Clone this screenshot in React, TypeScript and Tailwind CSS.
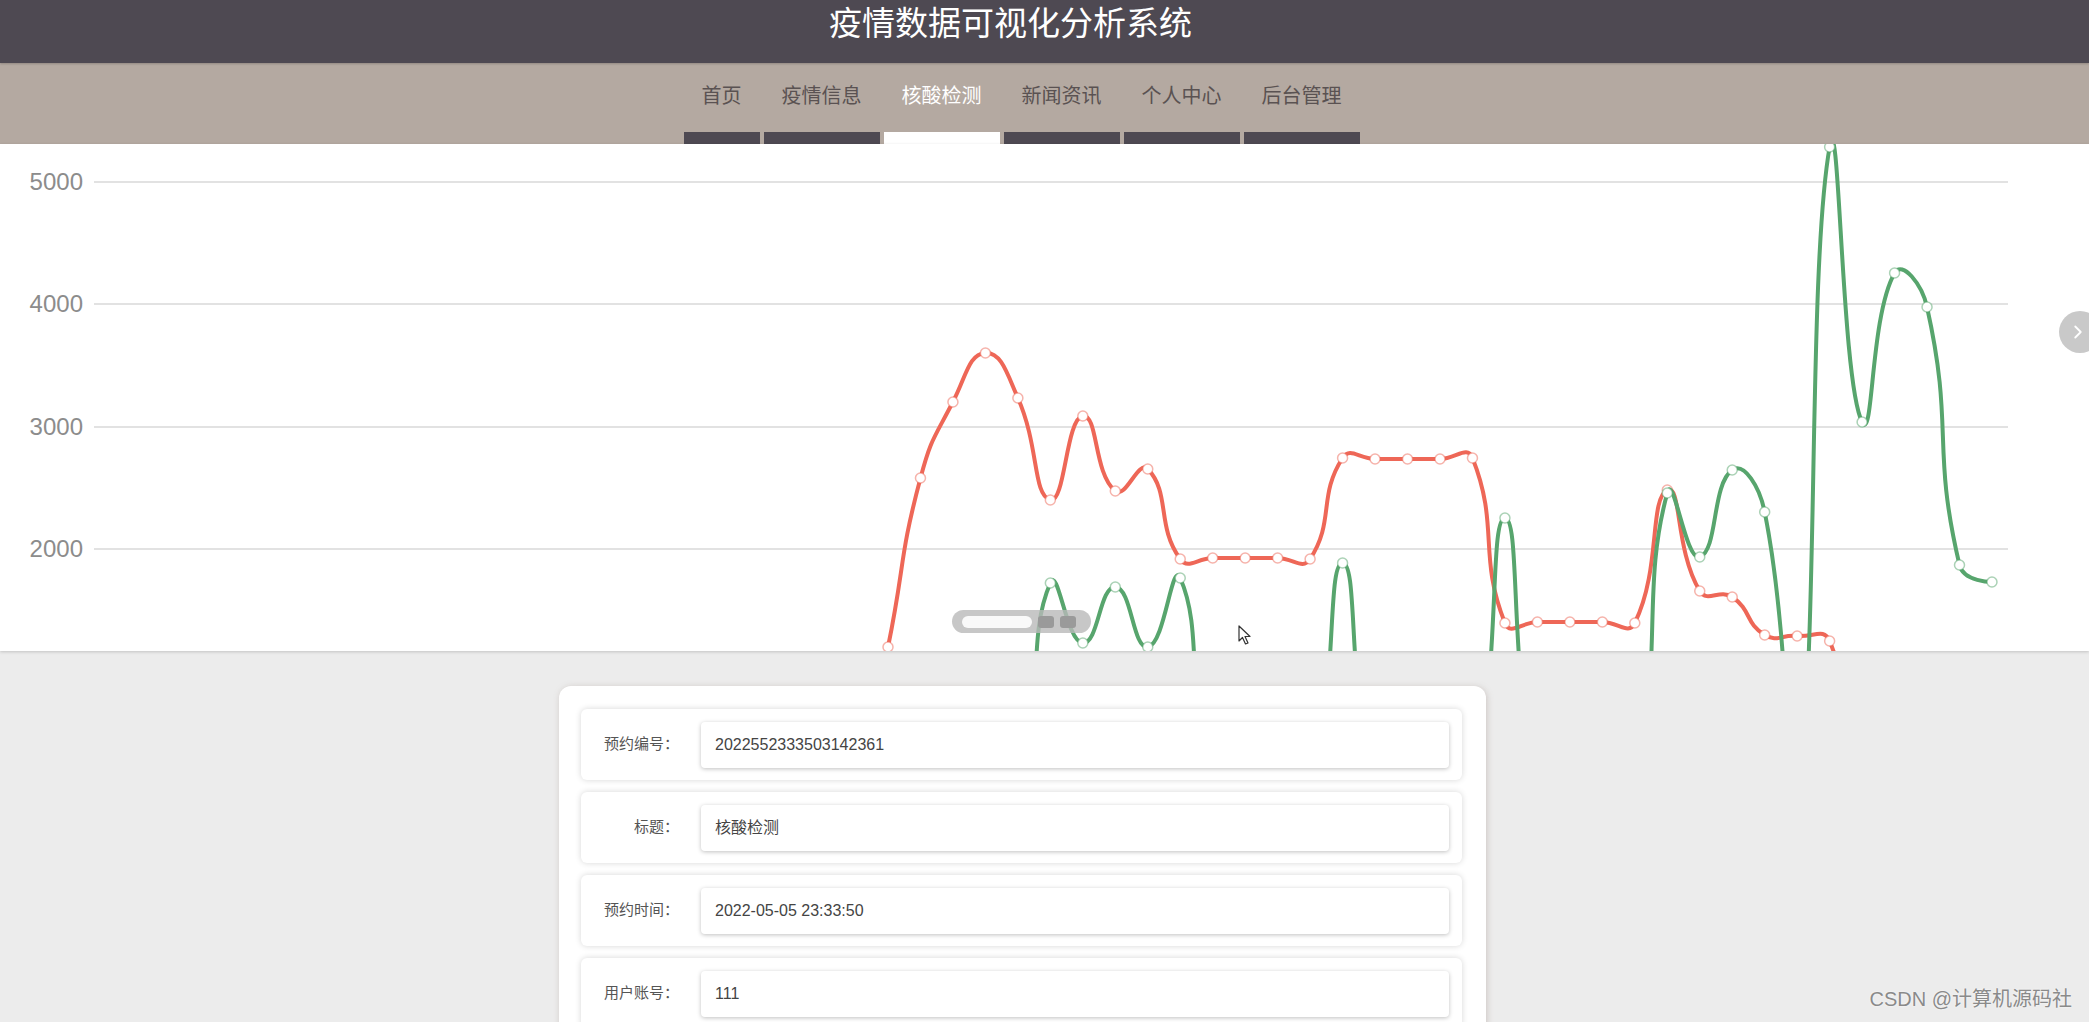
import React from "react";
import { ChevronRight } from "lucide-react";

const navItems = ["首页", "疫情信息", "核酸检测", "新闻资讯", "个人中心", "后台管理"];

const X0 = 888;
const STEP = 32.47;
const ZERO = 794;

// y coordinates per category index (index -2 .. 34), page coordinates
const redY: number[] = [
    ZERO, ZERO,
    647, 478, 402, 353, 398, 500, 416, 491, 469, 559,
    558, 558, 558, 559, 458, 459, 459, 459, 458, 623,
    622, 622, 622, 623, 490, 591, 597, 635, 636, 641,
    ZERO, ZERO, ZERO, ZERO, ZERO,
];

const greenY: number[] = [
    ZERO, ZERO,
    ZERO, ZERO, ZERO, ZERO, ZERO, 583, 643, 587, 647, 578,
    ZERO, ZERO, ZERO, ZERO, 563, ZERO, ZERO, ZERO, ZERO, 518,
    ZERO, ZERO, ZERO, ZERO, 493, 557, 470, 512, ZERO, 147,
    422, 273, 307, 565, 582,
];

type Pt = [number, number];

const toPoints = (ys: number[]): Pt[] => ys.map((y, i) => [X0 + STEP * (i - 2), y]);

// same control point rule as a smoothed echarts line
const smoothPath = (pts: Pt[], smooth = 0.5) => {
    const n = pts.length;
    const outCp: Pt[] = [];
    const inCp: Pt[] = [];
    for (let i = 0; i < n; i++) {
        const [x, y] = pts[i];
        if (i === 0 || i === n - 1) {
            outCp.push([x, y]);
            inCp.push([x, y]);
            continue;
        }
        const [px, py] = pts[i - 1];
        const [nx, ny] = pts[i + 1];
        const vx = nx - px;
        const vy = ny - py;
        const lPrev = Math.hypot(x - px, y - py);
        const lNext = Math.hypot(nx - x, ny - y);
        const r = lNext / (lNext + lPrev);
        outCp.push([x + vx * smooth * r, y + vy * smooth * r]);
        inCp.push([x - vx * smooth * (1 - r), y - vy * smooth * (1 - r)]);
    }
    let d = `M${pts[0][0].toFixed(1)},${pts[0][1]}`;
    for (let i = 0; i < n - 1; i++) {
        const c1 = outCp[i];
        const c2 = inCp[i + 1];
        const p = pts[i + 1];
        d += ` C${c1[0].toFixed(1)},${c1[1].toFixed(1)} ${c2[0].toFixed(1)},${c2[1].toFixed(1)} ${p[0].toFixed(1)},${p[1]}`;
    }
    return d;
};

const Series = ({ ys, color }: { ys: number[]; color: string }) => {
    const pts = toPoints(ys);
    return (
        <g>
            <path d={smoothPath(pts)} fill="none" stroke={color} strokeWidth={4} strokeLinejoin="round" />
            {pts
                .filter((p) => p[1] < 660)
                .map((p, i) => (
                    <circle key={i} cx={p[0]} cy={p[1]} r={5} fill="#fff" stroke={color} strokeOpacity={0.5} strokeWidth={1.5} />
                ))}
        </g>
    );
};

const Chart = () => {
    const grid = [
        { v: "5000", y: 182 },
        { v: "4000", y: 304 },
        { v: "3000", y: 427 },
        { v: "2000", y: 549 },
    ];
    return (
        <div className="relative h-[507px] bg-white overflow-hidden shadow-[0_1px_3px_rgba(0,0,0,0.18)] z-10">
            <svg width="2089" height="507" viewBox="0 144 2089 507" className="block">
                {grid.map((g) => (
                    <g key={g.v}>
                        <line x1={94} x2={2008} y1={g.y} y2={g.y} stroke="#e2e2e2" strokeWidth={2} />
                        <text
                            x={83}
                            y={g.y + 8}
                            textAnchor="end"
                            fontSize={24}
                            fill="#8c8c8c"
                            fontFamily="'Liberation Sans', sans-serif"
                        >
                            {g.v}
                        </text>
                    </g>
                ))}
                <Series ys={redY} color="#ee6757" />
                <Series ys={greenY} color="#57a56d" />
            </svg>

            {/* data zoom handle */}
            <div className="absolute left-[952px] top-[466px] w-[139px] h-[23px] rounded-full bg-[#b9b9b9]/80 flex items-center pl-[10px] gap-[6px]">
                <div className="w-[70px] h-[12px] rounded-full bg-white/90" />
                <div className="w-[16px] h-[12px] rounded-[3px] bg-[#9a9a9a]" />
                <div className="w-[16px] h-[12px] rounded-[3px] bg-[#9a9a9a]" />
            </div>

            {/* mouse pointer */}
            <svg className="absolute left-[1238px] top-[481px]" width="14" height="21" viewBox="0 0 14 21">
                <path d="M1 1 L1 16 L4.5 12.5 L7.5 19 L10 18 L7 11.5 L12 11.5 Z" fill="#fff" stroke="#333" strokeWidth="1.2" strokeLinejoin="round" />
            </svg>

            {/* next arrow */}
            <div className="absolute left-[2059px] top-[167px] w-[42px] h-[42px] rounded-full bg-[#c9c9c9] flex items-center pl-[8px]">
                <ChevronRight className="text-white w-[22px] h-[22px]" strokeWidth={2} />
            </div>
        </div>
    );
};

const Field = ({ label, value }: { label: string; value: string }) => (
    <div className="h-[71px] shrink-0 bg-white rounded-[6px] shadow-[0_0_6px_rgba(0,0,0,0.16)] flex items-center">
        <div className="w-[98px] text-right text-[15px] text-[#555]">{label}：</div>
        <div className="ml-[22px] mr-[13px] flex-1 h-[46px] rounded-[4px] bg-white shadow-[0_1px_4px_rgba(0,0,0,0.25)] flex items-center pl-[14px] text-[16px] text-[#444]">
            {value}
        </div>
    </div>
);

const App = () => {
    return (
        <div className="relative w-full h-[1022px] overflow-hidden bg-[#ececec] font-['Liberation_Sans','Noto_Sans_CJK_SC',sans-serif]">
            <div className="h-[63px] bg-[#4e4952] flex justify-center pr-[68px] pt-[3px] shadow-[0_1px_2px_rgba(0,0,0,0.2)] relative z-20">
                <h1 className="text-[33px] leading-[42px] text-white">疫情数据可视化分析系统</h1>
            </div>

            <nav className="h-[81px] bg-[#b4a9a1] flex justify-center items-stretch gap-[4px] pr-[46px]">
                {navItems.map((item) => {
                    const active = item === "核酸检测";
                    return (
                        <div key={item} className="flex flex-col justify-between">
                            <span
                                className={
                                    "px-[18px] pt-[23px] text-[20px] leading-[20px] " +
                                    (active ? "text-white" : "text-[#5a5252]")
                                }
                            >
                                {item}
                            </span>
                            <div className={active ? "h-[12px] bg-white" : "h-[12px] bg-[#4e4952]"} />
                        </div>
                    );
                })}
            </nav>

            <Chart />

            <div className="flex justify-center pr-[44px] pt-[35px]">
                <div className="w-[927px] h-[420px] bg-white rounded-[12px] shadow-[1px_1px_6px_rgba(150,130,120,0.35)] pl-[22px] pr-[24px] pt-[23px] flex flex-col gap-[12px]">
                    <Field label="预约编号" value="2022552333503142361" />
                    <Field label="标题" value="核酸检测" />
                    <Field label="预约时间" value="2022-05-05 23:33:50" />
                    <Field label="用户账号" value="111" />
                </div>
            </div>

            <div className="absolute right-[17px] bottom-[8px] text-[20px] text-[#8a8a8a] [text-shadow:0_0_2px_#fff]">
                CSDN @计算机源码社
            </div>
        </div>
    );
};

export default App;
